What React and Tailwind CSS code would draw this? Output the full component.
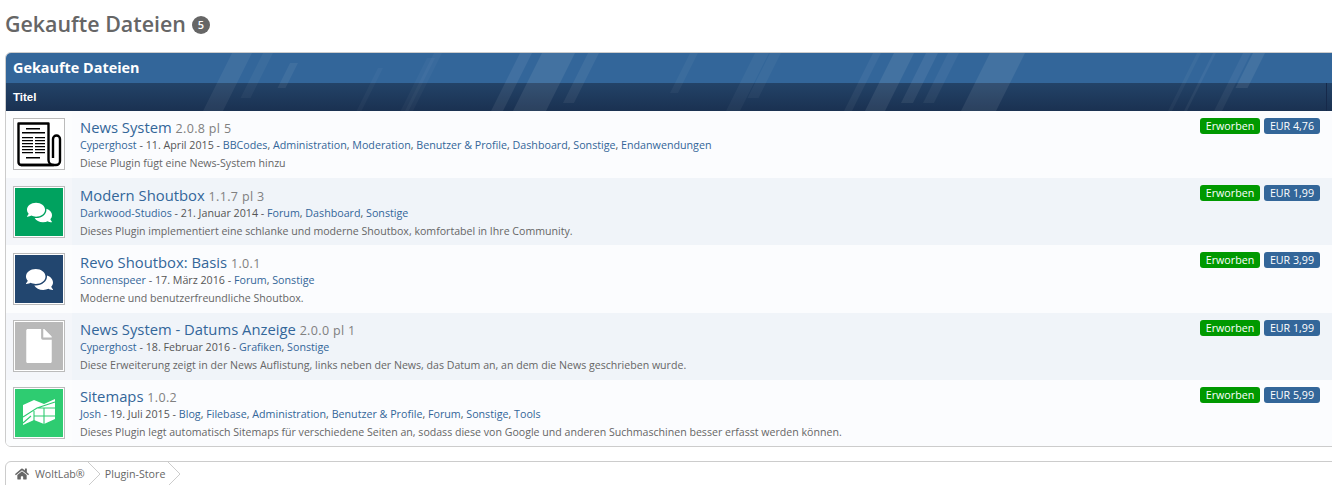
import { FaComments, FaFile, FaHome } from "react-icons/fa";

const font = "font-['Open_Sans','Liberation_Sans',sans-serif]";

function NewsIcon() {
  return (
    <svg viewBox="0 0 48 48" className="w-full h-full bg-white">
      <path d="M6 45a3 3 0 0 1-2.5-3V3.5h30V40a5 5 0 0 0 5 5z" fill="none" stroke="#000" strokeWidth="2.4" strokeLinejoin="round" />
      <path d="M6 45h35a4 4 0 0 0 4-4V19a3.5 3.5 0 0 0-7 0v19" fill="none" stroke="#000" strokeWidth="2.4" />
      <path d="M11 8h14v1.5H11zM7 12h23v1.5H7zM7 17h11v1.2H7zM20 17h10v1.2H20zM7 20h11v1.2H7zM20 20h10v1.2H20zM7 23h11v1.2H7zM20 23h10v1.2H20zM7 26h11v1.2H7zM20 26h10v1.2H20zM7 29h11v1.2H7zM20 29h10v1.2H20zM7 32h11v1.2H7zM20 32h10v1.2H20zM11 37h14v1.5H11z" fill="#000" />
    </svg>
  );
}

function MapIcon() {
  return (
    <svg viewBox="0 0 48 48" className="w-full h-full bg-[#2ecc71]">
      <path d="M8 16l11-5 10 4 11-5v20l-11 5-10-4-11 5z" fill="#fff" />
      <path d="M8 28l14-9 18-6M19 22v10M29 19v16M22 19h18M19 27h21M8 34l8-7" fill="none" stroke="#2ecc71" strokeWidth="1.1" />
    </svg>
  );
}

const rows = [
  {
    name: "News System",
    version: "2.0.8 pl 5",
    author: "Cyperghost",
    date: "11. April 2015",
    tags: ["BBCodes", "Administration", "Moderation", "Benutzer & Profile", "Dashboard", "Sonstige", "Endanwendungen"],
    desc: "Diese Plugin fügt eine News-System hinzu",
    price: "EUR 4,76",
    size: "h-[67px]",
    pad: "pt-[7px]",
    icon: <NewsIcon />,
  },
  {
    name: "Modern Shoutbox",
    version: "1.1.7 pl 3",
    author: "Darkwood-Studios",
    date: "21. Januar 2014",
    tags: ["Forum", "Dashboard", "Sonstige"],
    desc: "Dieses Plugin implementiert eine schlanke und moderne Shoutbox, komfortabel in Ihre Community.",
    price: "EUR 1,99",
    size: "h-[67px]",
    pad: "pt-[8px]",
    icon: (
      <div className="w-full h-full bg-[#00a25f] flex items-center justify-center text-white">
        <FaComments size={25} />
      </div>
    ),
  },
  {
    name: "Revo Shoutbox: Basis",
    version: "1.0.1",
    author: "Sonnenspeer",
    date: "17. März 2016",
    tags: ["Forum", "Sonstige"],
    desc: "Moderne und benutzerfreundliche Shoutbox.",
    price: "EUR 3,99",
    size: "h-[68px]",
    pad: "pt-[8px]",
    icon: (
      <div className="w-full h-full bg-[#22466f] flex items-center justify-center text-white">
        <FaComments size={27} />
      </div>
    ),
  },
  {
    name: "News System - Datums Anzeige",
    version: "2.0.0 pl 1",
    author: "Cyperghost",
    date: "18. Februar 2016",
    tags: ["Grafiken", "Sonstige"],
    desc: "Diese Erweiterung zeigt in der News Auflistung, links neben der News, das Datum an, an dem die News geschrieben wurde.",
    price: "EUR 1,99",
    size: "h-[67px]",
    pad: "pt-[7px]",
    icon: (
      <div className="w-full h-full bg-[#b9b9b9] flex items-center justify-center text-white">
        <FaFile size={34} />
      </div>
    ),
  },
  {
    name: "Sitemaps",
    version: "1.0.2",
    author: "Josh",
    date: "19. Juli 2015",
    tags: ["Blog", "Filebase", "Administration", "Benutzer & Profile", "Forum", "Sonstige", "Tools"],
    desc: "Dieses Plugin legt automatisch Sitemaps für verschiedene Seiten an, sodass diese von Google und anderen Suchmaschinen besser erfasst werden können.",
    price: "EUR 5,99",
    size: "h-[66px]",
    pad: "pt-[7px]",
    icon: <MapIcon />,
  },
];

// x at the top of the streak (page px), width, y from, y to, opacity
const streaks = [
  [232, 20, 0, 58, 0.06],
  [263, 10, 0, 45, 0.04],
  [290, 8, 10, 35, 0.06],
  [378, 5, 15, 58, 0.03],
  [427, 8, 5, 58, 0.03],
  [434, 8, 0, 58, 0.03],
  [520, 12, 0, 58, 0.07],
  [542, 33, 0, 58, 0.08],
  [588, 11, 0, 50, 0.06],
  [690, 8, 0, 40, 0.04],
  [755, 14, 0, 58, 0.04],
  [770, 11, 0, 45, 0.04],
  [873, 8, 0, 58, 0.05],
  [894, 20, 0, 58, 0.08],
  [926, 12, 0, 50, 0.07],
  [948, 11, 0, 50, 0.05],
  [990, 35, 0, 58, 0.08],
  [1197, 4, 0, 58, 0.04],
  [1213, 3, 0, 58, 0.05],
  [1243, 8, 0, 58, 0.05],
  [1253, 12, 0, 35, 0.08],
];

function Streaks() {
  return (
    <svg className="absolute left-0 top-0 w-[1338px] h-[58px] pointer-events-none" viewBox="0 0 1338 58">
      {streaks.map(([x, w, y0, y1, o], i) => {
        // panel starts at page x 6
        const left = x - 6;
        const dx = (y1 - y0) * 0.5;
        return (
          <polygon key={i} points={`${left},${y0} ${left + w},${y0} ${left + w - dx},${y1} ${left - dx},${y1}`} fill="#fff" opacity={o} />
        );
      })}
    </svg>
  );
}

function Chevron() {
  return (
    <svg viewBox="0 0 12 24" className="w-[12px] h-[24px] shrink-0">
      <path d="M0 0l12 12L0 24" fill="none" stroke="#ccc" />
    </svg>
  );
}

export default function App() {
  return (
    <div className={`${font} h-[485px] w-[1332px] overflow-hidden bg-white pl-[5px] text-[#666]`}>
      <h1 className="flex items-center h-[52px] pb-[4px] text-[21.4px] font-semibold text-[#666] gap-[6px]">
        Gekaufte Dateien
        <span className="w-[18px] h-[18px] rounded-full bg-[#666] text-white text-[11px] flex items-center justify-center mt-[2px]">5</span>
      </h1>

      <div className="w-[1340px] rounded-[6px] border border-[#ccc] overflow-hidden">
        <div className="relative text-white">
          <Streaks />
          <div className="h-[30px] bg-[#33669a] flex items-center pl-[7px] text-[14.4px] font-bold">Gekaufte Dateien</div>
          <div className="h-[28px] bg-gradient-to-b from-[#234368] to-[#1a3151] flex">
            <div className="w-[1321px] border-r border-[#16294a] flex items-center pl-[7px] pt-[2px] font-['Liberation_Sans',sans-serif] text-[11.5px] font-bold">Titel</div>
          </div>
        </div>

        {rows.map((r, i) => (
          <div key={i} className={`flex ${r.size} ${i % 2 ? "bg-[#f0f4f9]" : "bg-[#fbfcfe]"}`}>
            <div className={`w-[66px] pl-[7px] ${r.pad} shrink-0 ${i % 2 ? "bg-[#f4f6fa]" : "bg-[#fcfdfe]"}`}>
              <div className="w-[52px] h-[52px] border border-[#bbb] bg-white p-[1px]">{r.icon}</div>
            </div>
            <div className={`pl-[8px] ${r.pad} flex-1 min-w-0`}>
              <div className="text-[14.8px] leading-[19px] text-[#336699]">
                {r.name} <span className="text-[12.5px] tracking-[0.35px] text-[#808080]">{r.version}</span>
              </div>
              <div className="text-[10.7px] leading-[14px] text-[#555]">
                <span className="text-[#336699]">{r.author}</span> - {r.date} -{" "}
                {r.tags.map((t, j) => (
                  <span key={t}>
                    <span className="text-[#336699]">{t}</span>
                    {j < r.tags.length - 1 ? ", " : ""}
                  </span>
                ))}
              </div>
              <div className="text-[10.6px] leading-[14px] mt-[4px] text-[#666]">{r.desc}</div>
            </div>
            <div className="flex gap-[4px] pt-[7px] pr-[24px] shrink-0">
              <span className="h-[16px] w-[60px] rounded-[3px] bg-[#009900] text-white text-[10.7px] flex items-center justify-center">Erworben</span>
              <span className="h-[16px] w-[56px] rounded-[3px] bg-[#336699] text-white text-[10.7px] flex items-center justify-center">{r.price}</span>
            </div>
          </div>
        ))}
      </div>

      <div className="mt-[14px] w-[1340px] h-[40px] rounded-t-[6px] border border-[#ccc] flex text-[10.7px] text-[#666]">
        <div className="flex items-center h-[24px] pl-[9px] gap-[6px]">
          <FaHome size={14} />
          <span>WoltLab®</span>
        </div>
        <div className="ml-[3px]"><Chevron /></div>
        <div className="flex items-center h-[24px] pl-[5px]">Plugin-Store</div>
        <div className="ml-[3px]"><Chevron /></div>
      </div>
    </div>
  );
}
